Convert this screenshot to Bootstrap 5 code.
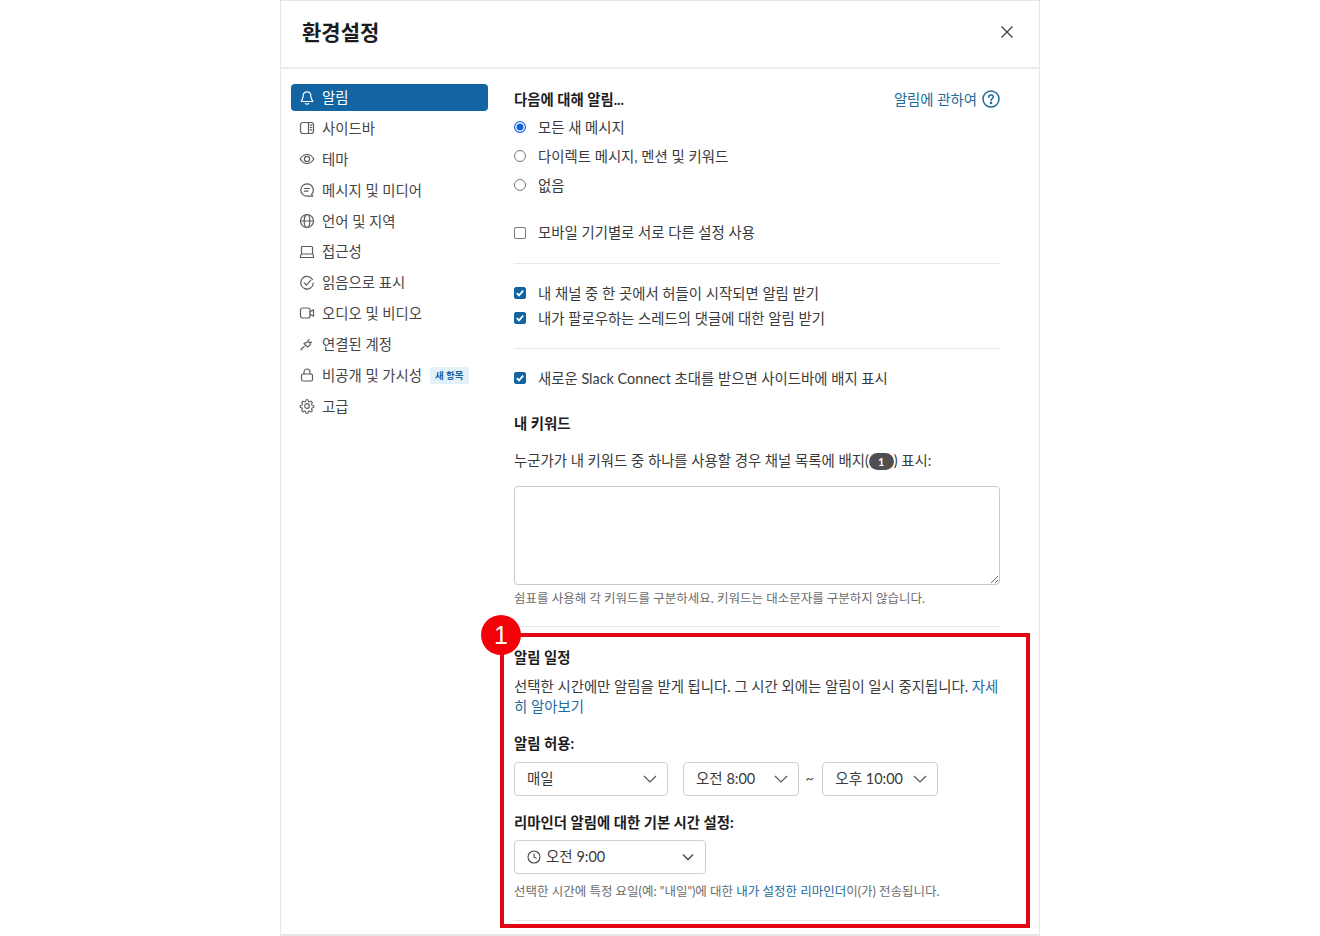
<!doctype html>
<html lang="ko">
<head>
<meta charset="utf-8">
<title>환경설정</title>
<link href="https://cdn.jsdelivr.net/npm/bootstrap@5.3.0/dist/css/bootstrap.min.css" rel="stylesheet">
<style>
html,body{height:936px;overflow:hidden;background:#fff}
body{font-family:Lato,"Noto Sans CJK KR",sans-serif;font-size:14.4px;line-height:20px;color:#2c2c2d}
.pref-dialog{width:760px;height:936px;margin-left:280px;border:1px solid #e6e6e6;border-bottom:2px solid #e6e6e6;overflow:hidden;position:relative;background:#fff}
.pref-head{height:68px;border-bottom:2px solid #ececec;padding:0 25px 4px 21px}
.pref-title{font-size:21px;font-weight:700;line-height:30px;margin:0;color:#1d1c1d}
.pref-side{width:197px;margin:15px 0 0 10px;gap:3.85px}
.side-item{height:27px;border-radius:4px;padding:0 8px;gap:7px;color:#454546;font-size:14.4px}
.side-item span:not(.new-tag){padding-top:1.5px}
.side-item svg{width:16px;height:16px;flex:none;stroke:#5c5c5d;fill:none;stroke-width:1.2;stroke-linecap:round;stroke-linejoin:round}
.side-active{background:#1264a3;color:#fff}
.side-active svg{stroke:#fff}
.new-tag{font-size:9.5px;line-height:17px;height:17px;background:#e3f1f9;color:#1264a3;border-radius:3px;padding:0 5px;font-weight:700;margin-left:1px}
.pref-main{width:486px;margin-left:26px;padding-top:20px;color:#3a3a3b}
.top-row{height:20px}
.sect-h{font-weight:700;color:#1d1c1d;font-size:14.4px}
.first-h{padding-top:2px}
.about-link{color:#1d6a9c;font-size:14.4px;gap:5px}
.pick-row{height:28.8px;gap:12px}
.pick-row.first{margin-top:4px}
.row-text{padding-top:2px}
.fake-radio{width:12px;height:12px;border-radius:50%;border:1px solid #77777a;background:#fff;flex:none}
.fake-radio.on{border:1.5px solid #1264f0;box-shadow:inset 0 0 0 1.5px #fff;background:#1264d8}
.fake-check{width:12px;height:12px;border-radius:2px;border:1px solid #77777a;background:#fff;flex:none}
.fake-check.on{background:#1264a3;border-color:#1264a3;display:flex}
.fake-check svg{width:10px;height:10px;fill:none;stroke:#fff;stroke-width:1.8}
.check-row{height:20px;gap:12px}
.mt-mobile{margin-top:24px}
.divide{height:1px;background:#e8e8e8;border:0;margin:0;opacity:1}
.dv-a{margin-top:20px}.dv-b{margin-top:20px}
.gap-a{margin-top:19px}.gap-b{margin-top:5px}
.gap-c{margin-top:19px}
.gap-d{margin-top:26px}
.gap-e{margin-top:17px;height:20px}
.count-pill{display:inline-flex;align-items:center;justify-content:center;width:25px;height:17px;border-radius:9px;background:#4f4f50;color:#fff;font-size:11px;font-weight:700;line-height:17px;vertical-align:0}
.kw-box{width:486px;height:99px;margin-top:15px;display:block;border:1px solid #c9c9ca;border-radius:4px;resize:both;outline:0;background:#fff}
.hint-line{font-size:12.5px;line-height:16px;color:#6b6b6c}
.hint-a{margin-top:6px}
.dv-d{margin-top:19px}
.gap-f{margin-top:21px}
.gap-g{margin-top:9px;word-break:break-all}
.body-link{color:#1d6a9c;text-decoration:none}
.gap-h{margin-top:17px}
.gap-i{margin-top:8px;gap:15px}
.pick-box{height:34px;border:1px solid #cfcfd0;border-radius:4px;padding:0 10px 0 12px;background:#fff;color:#3a3a3b;flex:none;font-size:14.5px}
.pick-box svg.chev{width:14px;height:14px;fill:none;stroke:#555;stroke-width:1.2;flex:none}
.w-day{width:154px}.w-time{width:115.5px}.w-rem{width:192px}
.tilde{margin:0 -6.500px 0 -8px;color:#555}
.clock-gap{gap:5px}
.gap-j{margin-top:17px}
.gap-k{margin-top:7px}
.gap-l{margin-top:10px}
.dv-e{margin-top:20px}
.mark-box{position:absolute;left:219px;top:632px;width:530px;height:295px;border:4px solid #e30613;pointer-events:none}
.mark-num{position:absolute;left:200px;top:614px;width:40px;height:40px;border-radius:50%;background:#f40009;color:#fff;font-size:25px;line-height:40px;text-align:center;font-family:"Liberation Sans",sans-serif}
</style>
</head>
<body>
<div class="pref-dialog">
  <header class="pref-head d-flex align-items-center justify-content-between">
    <h1 class="pref-title">환경설정</h1>
    <svg width="14" height="14" viewBox="0 0 14 14" fill="none" stroke="#444" stroke-width="1.3" aria-label="닫기"><path d="M1.5 1.5l11 11M12.5 1.5l-11 11"/></svg>
  </header>
  <div class="d-flex">
    <nav class="pref-side d-flex flex-column flex-shrink-0">
      <div class="side-item side-active d-flex align-items-center"><svg viewBox="0 0 16 16"><path d="M8 1.8c-2.4 0-3.8 1.8-3.8 4 0 3.2-1.7 4.6-2 5.7h11.6c-.3-1.1-2-2.5-2-5.700 0-2.200-1.400-4-3.800-4z"/><path d="M6.400 13.600c.4.6 2.800.6 3.200 0"/></svg><span>알림</span></div>
      <div class="side-item d-flex align-items-center"><svg viewBox="0 0 16 16"><rect x="1.5" y="2.5" width="13" height="11" rx="2.5"/><path d="M9.5 2.5v11M11.3 5.2h1.4M11.3 7.5h1.4M11.3 9.8h1.4"/></svg><span>사이드바</span></div>
      <div class="side-item d-flex align-items-center"><svg viewBox="0 0 16 16"><path d="M1.2 8C3 4.8 5.3 3.5 8 3.5s5 1.3 6.8 4.5C13 11.2 10.7 12.5 8 12.5S3 11.2 1.2 8z"/><circle cx="8" cy="8" r="2.6"/></svg><span>테마</span></div>
      <div class="side-item d-flex align-items-center"><svg viewBox="0 0 16 16"><path d="M8 1.8a6.2 6.2 0 1 0 0 12.4h5.8l-1.2-2A6.2 6.2 0 0 0 8 1.8z"/><path d="M5.5 6.5h5M5.5 9.2h3.4"/></svg><span>메시지 및 미디어</span></div>
      <div class="side-item d-flex align-items-center"><svg viewBox="0 0 16 16"><circle cx="8" cy="8" r="6.5"/><ellipse cx="8" cy="8" rx="2.8" ry="6.5"/><path d="M1.5 8h13"/></svg><span>언어 및 지역</span></div>
      <div class="side-item d-flex align-items-center"><svg viewBox="0 0 16 16"><path d="M3.500 2.500h9a1 1 0 0 1 1 1V10h-11V3.500a1 1 0 0 1 1-1zM2.500 10h11l1 1.500v2h-13v-2z"/></svg><span>접근성</span></div>
      <div class="side-item d-flex align-items-center"><svg viewBox="0 0 16 16"><path d="M13.400 4.500A6.300 6.300 0 1 0 14.300 8"/><path d="M5.200 7.800l2.200 2.300 4.300-4.800"/></svg><span>읽음으로 표시</span></div>
      <div class="side-item d-flex align-items-center"><svg viewBox="0 0 16 16"><rect x="1.500" y="3" width="9.500" height="10" rx="2"/><path d="M11 6.800l3.500-2v6.400l-3.500-2"/></svg><span>오디오 및 비디오</span></div>
      <div class="side-item d-flex align-items-center"><svg viewBox="0 0 16 16"><path d="M2 14c.8-2.500 2-2 3.200-3.500M5 7.500l3.500 3.500 2-1.500c1-1 .9-2.300.2-3-.8-.8-2-.9-3-.1zM10 3.500L8.800 5M12.500 6L11 7.200"/></svg><span>연결된 계정</span></div>
      <div class="side-item d-flex align-items-center"><svg viewBox="0 0 16 16"><rect x="2.500" y="7" width="11" height="7" rx="1.500"/><path d="M5 7V5a3 3 0 0 1 6 0v2"/></svg><span>비공개 및 가시성</span><span class="new-tag">새 항목</span></div>
      <div class="side-item d-flex align-items-center"><svg viewBox="0 0 16 16"><circle cx="8" cy="8" r="2.300"/><path d="M6.900 1.500h2.200l.4 1.900 1.300.6 1.700-1 1.500 1.600-1 1.600.6 1.300 1.900.4v2.200l-1.900.4-.6 1.300 1 1.700-1.500 1.500-1.700-1-1.300.6-.4 1.900H6.900l-.4-1.900-1.300-.6-1.700 1-1.500-1.500 1-1.700-.6-1.300-1.900-.4V7.900l1.900-.4.600-1.300-1-1.600 1.500-1.600 1.700 1 1.300-.6z" transform="translate(8 8) scale(.9) translate(-8 -8.400)"/></svg><span>고급</span></div>
    </nav>
    <main class="pref-main">
      <div class="top-row d-flex justify-content-between align-items-center">
        <span class="sect-h first-h">다음에 대해 알림...</span>
        <span class="about-link d-flex align-items-center"><span class="first-h">알림에 관하여</span> <svg width="18" height="18" viewBox="0 0 18 18" fill="none" stroke="#1d6a9c" stroke-width="1.500"><circle cx="9" cy="9" r="8"/><path d="M6.700 7.200c0-3 4.600-3 4.600-.2 0 1.700-2.300 1.700-2.300 3.500" stroke-linecap="round"/><circle cx="9" cy="13" r=".6" fill="#1d6a9c"/></svg></span>
      </div>
      <div class="pick-row first d-flex align-items-center"><span class="fake-radio on"></span><span class="row-text">모든 새 메시지</span></div>
      <div class="pick-row d-flex align-items-center"><span class="fake-radio"></span><span class="row-text">다이렉트 메시지, 멘션 및 키워드</span></div>
      <div class="pick-row d-flex align-items-center"><span class="fake-radio"></span><span class="row-text">없음</span></div>
      <div class="check-row mt-mobile d-flex align-items-center"><span class="fake-check"></span><span>모바일 기기별로 서로 다른 설정 사용</span></div>
      <hr class="divide dv-a">
      <div class="check-row gap-a d-flex align-items-center"><span class="fake-check on"><svg viewBox="0 0 10 10"><path d="M1.800 5.200l2.200 2.200 4.200-4.800"/></svg></span><span class="row-text">내 채널 중 한 곳에서 허들이 시작되면 알림 받기</span></div>
      <div class="check-row gap-b d-flex align-items-center"><span class="fake-check on"><svg viewBox="0 0 10 10"><path d="M1.800 5.200l2.200 2.200 4.200-4.800"/></svg></span><span class="row-text">내가 팔로우하는 스레드의 댓글에 대한 알림 받기</span></div>
      <hr class="divide dv-b">
      <div class="check-row gap-c d-flex align-items-center"><span class="fake-check on"><svg viewBox="0 0 10 10"><path d="M1.800 5.200l2.200 2.200 4.200-4.800"/></svg></span><span class="row-text">새로운 Slack Connect 초대를 받으면 사이드바에 배지 표시</span></div>
      <div class="sect-h gap-d">내 키워드</div>
      <div class="gap-e">누군가가 내 키워드 중 하나를 사용할 경우 채널 목록에 배지(<span class="count-pill">1</span>) 표시:</div>
      <textarea class="kw-box" aria-label="내 키워드"></textarea>
      <div class="hint-line hint-a">쉼표를 사용해 각 키워드를 구분하세요. 키워드는 대소문자를 구분하지 않습니다.</div>
      <hr class="divide dv-d">
      <div class="sect-h gap-f">알림 일정</div>
      <div class="gap-g">선택한 시간에만 알림을 받게 됩니다. 그 시간 외에는 알림이 일시 중지됩니다. <a class="body-link" href="#">자세히 알아보기</a></div>
      <div class="sect-h gap-h">알림 허용:</div>
      <div class="gap-i d-flex align-items-center">
        <div class="pick-box w-day d-flex align-items-center justify-content-between"><span>매일</span><svg class="chev" viewBox="0 0 14 14"><path d="M1 4l6 6 6-6"/></svg></div>
        <div class="pick-box w-time d-flex align-items-center justify-content-between"><span>오전 8:00</span><svg class="chev" viewBox="0 0 14 14"><path d="M1 4l6 6 6-6"/></svg></div>
        <span class="tilde">~</span>
        <div class="pick-box w-time d-flex align-items-center justify-content-between"><span>오후 10:00</span><svg class="chev" viewBox="0 0 14 14"><path d="M1 4l6 6 6-6"/></svg></div>
      </div>
      <div class="sect-h gap-j">리마인더 알림에 대한 기본 시간 설정:</div>
      <div class="pick-box w-rem gap-k d-flex align-items-center justify-content-between"><span class="d-flex align-items-center clock-gap"><svg width="14" height="14" viewBox="0 0 14 14" fill="none" stroke="#444" stroke-width="1.100"><circle cx="7" cy="7" r="6"/><path d="M7 3.500V7l2.600 1.300"/></svg>오전 9:00</span><svg class="chev" viewBox="0 0 14 14"><path d="M2 4.500l5 5 5-5" stroke-width="1.600"/></svg></div>
      <div class="hint-line gap-l">선택한 시간에 특정 요일(예: "내일")에 대한 <a class="body-link" href="#">내가 설정한 리마인더</a>이(가) 전송됩니다.</div>
      <hr class="divide dv-e">
    </main>
  </div>
  <div class="mark-box"></div>
  <div class="mark-num">1</div>
</div>
<script src="https://cdn.jsdelivr.net/npm/bootstrap@5.3.0/dist/js/bootstrap.bundle.min.js"></script>
</body>
</html>
